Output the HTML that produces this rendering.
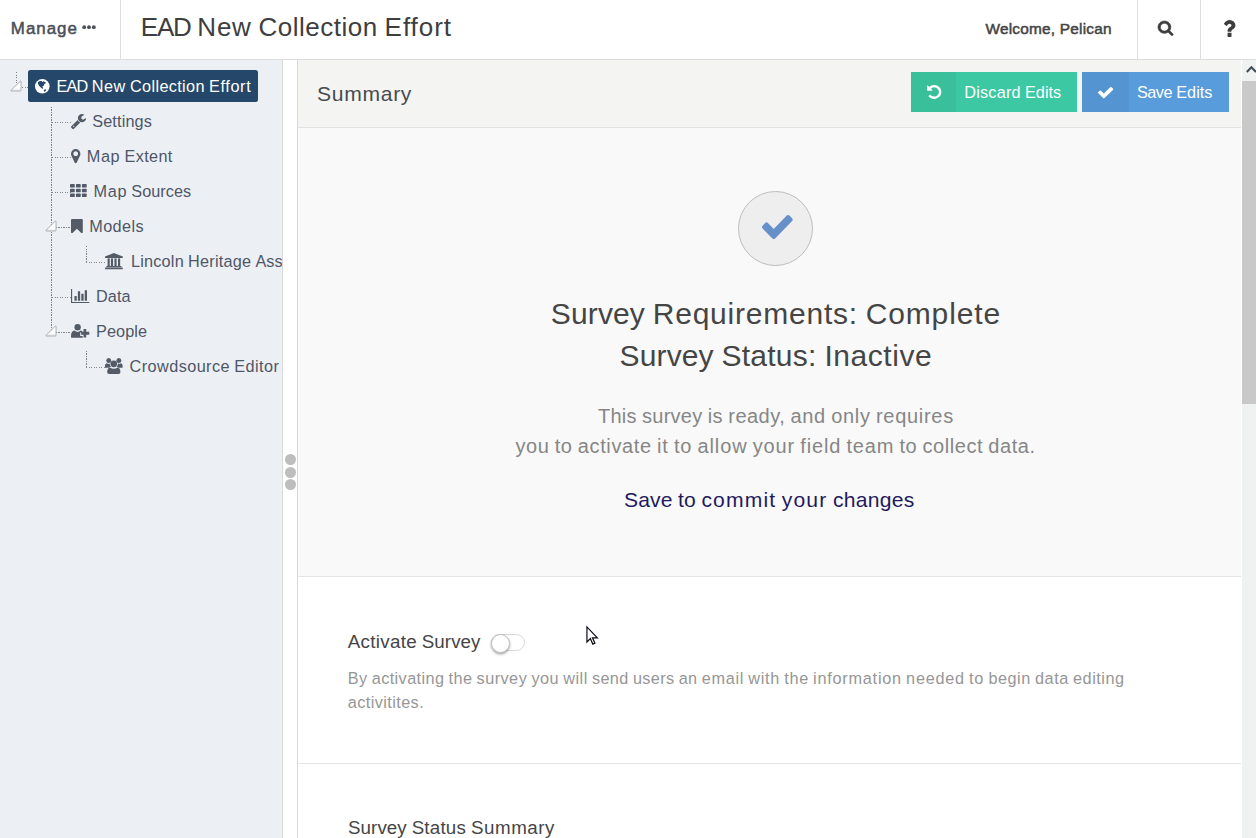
<!DOCTYPE html>
<html lang="en">
<head>
<meta charset="utf-8">
<title>EAD New Collection Effort</title>
<style>
html,body{margin:0;padding:0}
body{width:1256px;height:838px;overflow:hidden;position:relative;background:#fff;font-family:'Liberation Sans',sans-serif}
.t{position:absolute;white-space:nowrap;margin:0;padding:0;font-weight:400;display:block}
.i{position:absolute;display:block;overflow:visible}
.abs,.hd,.vd{position:absolute;display:block}
.hd{height:1.25px;background:repeating-linear-gradient(90deg,#666b75 0,#666b75 1.25px,transparent 1.25px,transparent 2.5px);opacity:.8}
.vd{width:1.25px;background:repeating-linear-gradient(180deg,#5d626c 0,#5d626c 1.25px,transparent 1.25px,transparent 2.5px);opacity:.8}
header{position:absolute;left:0;top:0;width:1256px;height:59px;background:#fff;border-bottom:1px solid #dcdcdc}
.vr{position:absolute;top:0;width:1px;height:59px;background:#dedede}
nav{position:absolute;left:0;top:60px;width:282px;height:778px;background:#ecf0f5;border-right:1px solid #d9d9d9;overflow:hidden}
nav .in{position:absolute;left:0;top:-60px;width:282px;height:838px}
.sel{position:absolute;left:28px;top:70px;width:230px;height:31.500px;background:#25476a;border-radius:2.500px}
.split{position:absolute;left:283px;top:60px;width:14px;height:778px;background:#fff}
.split b{position:absolute;left:2px;width:11px;height:11px;border-radius:50%;background:#bdbdbd}
main{position:absolute;left:297px;top:60px;width:944px;height:778px;border-left:1px solid #d9d9d9;box-sizing:border-box;background:#fff;overflow:hidden}
main .in{position:absolute;left:-298px;top:-60px;width:1256px;height:838px}
.bar{position:absolute;left:298px;top:60px;width:943px;height:67px;background:#f4f4f2;border-bottom:1px solid #e2e2e2}
.hero{position:absolute;left:298px;top:128px;width:943px;height:448px;background:#f9f9f9;border-bottom:1px solid #e4e4e4}
.hr{position:absolute;left:298px;width:943px;height:1px;background:#e4e4e4}
.btn{position:absolute;top:72px;height:40px;border:0;padding:0;margin:0;font:inherit;text-align:left;border-radius:0;cursor:pointer}
.o{position:absolute;display:block;width:0;height:0}
.btn s{position:absolute;left:0;top:0;height:40px;display:block}
.circle{position:absolute;left:737.900px;top:190.800px;width:73.200px;height:73.200px;border-radius:50%;background:#eee;border:1px solid #bdbdbd}
.tog{position:absolute;left:491.200px;top:634px;width:31.500px;height:15.400px;border:1px solid #d9d9d9;border-radius:10px;background:#fff}
.knob{position:absolute;left:490.800px;top:633.600px;width:19px;height:19px;border-radius:50%;background:#fff;box-shadow:0 1.200px 2.500px rgba(0,0,0,.36);box-sizing:border-box;border:.9px solid #c2c2c2}
.sb{position:absolute;left:1242px;top:60px;width:14px;height:778px;background:#f0f1f1}
.sb u{position:absolute;left:0;top:21px;width:14px;height:323px;background:#c9c9c9;display:block}
</style>
</head>
<body>
<header>
<span class="t" style="left:10.80px;top:17.80px;font-size:16.9px;line-height:22px;letter-spacing:1.011px;color:#4a4f58;-webkit-text-stroke:.5px #4a4f58;">Manage</span>
<svg class="i" style="left:81.60px;top:24.80px" width="14.00" height="4.40" viewBox="0 0 14 4.400" preserveAspectRatio="none"><circle cx="2.200" cy="2.200" r="1.900" fill="#4a4f58"/><circle cx="7" cy="2.200" r="1.900" fill="#4a4f58"/><circle cx="11.800" cy="2.200" r="1.900" fill="#4a4f58"/></svg>
<i class="vr" style="left:120px"></i>
<h1 class="t" style="left:140.80px;top:9.50px;font-size:26px;line-height:34px;letter-spacing:0.313px;color:#3e3e3e;"><span style="letter-spacing:-1.221px;word-spacing:0.730px">EAD </span><span style="letter-spacing:0.771px;word-spacing:-1.262px">New </span><span style="letter-spacing:0.529px;word-spacing:-1.019px">Collection </span><span style="letter-spacing:0.967px">Effort</span></h1>
<span class="t" style="left:985.50px;top:17.90px;font-size:15.4px;line-height:21px;letter-spacing:0.213px;color:#444;-webkit-text-stroke:.5px #444;">Welcome, Pelican</span>
<i class="vr" style="left:1137px"></i>
<svg class="i" style="left:1158.30px;top:20.80px" width="15.20" height="14.60" viewBox="64.0 128.0 1664.0 1664.0" preserveAspectRatio="none"><path d="M1216 832q0-185-131.500-316.500t-316.500-131.500-316.500 131.500-131.500 316.500 131.500 316.500 316.500 131.500 316.500-131.500 131.500-316.500zm512 832q0 52-38 90t-90 38q-54 0-90-38l-343-342q-179 124-399 124-143 0-273.500-55.500t-225-150-150-225-55.500-273.500 55.500-273.500 150-225 225-150 273.500-55.500 273.500 55.500 225 150 150 225 55.500 273.500q0 220-124 399l343 343q37 37 37 90z" fill="#3d3d3d" stroke="#3d3d3d" stroke-width="70"/></svg>
<i class="vr" style="left:1200px"></i>
<svg class="i" style="left:1223.90px;top:20.00px" width="11.40" height="16.90" viewBox="479.9 256.0 924.1 1280.0" preserveAspectRatio="none"><path d="M1088 1256v240q0 16-12 28t-28 12h-240q-16 0-28-12t-12-28v-240q0-16 12-28t28-12h240q16 0 28 12t12 28zm316-600q0 54-15.500 101t-35 76.500-55 59.500-57.500 43.500-61 35.500q-41 23-68.500 65t-27.500 67q0 17-12 32.500t-28 15.500h-240q-15 0-25.500-18.500t-10.500-37.500v-45q0-83 65-156.500t143-108.500q59-27 84-56t25-76q0-42-46.500-74t-107.500-32q-65 0-108 29-35 25-107 115-13 16-31 16-12 0-25-8l-164-125q-13-10-15.500-25t5.500-28q160-266 464-266 80 0 161 31t146 83 106 127.500 41 158.500z" fill="#3d3d3d"/></svg>
</header>
<nav><div class="in">
<i class="vd" style="left:15.80px;top:72.00px;height:12.00px"></i><i class="hd" style="left:21.50px;top:86.90px;width:6.50px"></i><svg class="i" style="left:7.90px;top:78.40px" width="14" height="14" viewBox="0 0 14 14"><defs><linearGradient id="eg1" x1="0" y1="0" x2="0" y2="1"><stop offset=".7" stop-color="#fff"/><stop offset="1" stop-color="#e6e6e6"/></linearGradient></defs><path d="M12.400 3.100 Q13 2.500 13 3.500 V12.300 Q13 13 12.300 13 H3.500 Q2.300 13 3.100 12.200 Z" fill="url(#eg1)" stroke="#a4a8af" stroke-width=".9" stroke-linejoin="round"/></svg>
<div class="sel"></div>
<svg class="i" style="left:35.25px;top:78.75px" width="14.60" height="14.60" viewBox="0 0 100 100" preserveAspectRatio="none"><circle cx="50" cy="50" r="50" fill="#fff"/><path d="M20 22 Q32 10 46 14 L52 22 L56 16 L66 18 L76 28 L64 34 L60 46 L50 52 L56 62 L52 68 L42 60 L30 50 L22 36 Z" fill="#25476a"/><path d="M60 76 L72 70 L78 74 L70 86 L62 86 Z" fill="#25476a"/></svg><a class="t" style="left:56.40px;top:75.10px;font-size:16.25px;line-height:22px;letter-spacing:0.210px;color:#fff;"><span style="letter-spacing:-0.750px;word-spacing:0.456px">EAD </span><span style="letter-spacing:0.500px;word-spacing:-0.793px">New </span><span style="letter-spacing:0.343px;word-spacing:-0.637px">Collection </span><span style="letter-spacing:0.616px">Effort</span></a>
<i class="vd" style="left:50.80px;top:107.00px;height:224.00px"></i>
<i class="hd" style="left:52.00px;top:121.90px;width:19.30px"></i><svg class="i" style="left:70.80px;top:113.90px" width="15.10" height="15.20" viewBox="85.0 128.0 1641.0 1643.0" preserveAspectRatio="none"><path d="M448 1472q0-26-19-45t-45-19-45 19-19 45 19 45 45 19 45-19 19-45zm644-420l-682 682q-37 37-90 37-52 0-91-37l-106-108q-38-36-38-90 0-53 38-91l681-681q39 98 114.500 173.500t173.500 114.500zm634-435q0 39-23 106-47 134-164.500 217.500t-258.500 83.500q-185 0-316.500-131.500t-131.500-316.500 131.500-316.500 316.500-131.500q58 0 121.500 16.500t107.500 46.500q16 11 16 28t-16 28l-293 169v224l193 107q5-3 79-48.500t135.500-81 70.500-35.500q15 0 23.500 10t8.500 25z" fill="#525b66"/></svg><a class="t" style="left:92.20px;top:110.10px;font-size:16.25px;line-height:22px;letter-spacing:0.140px;color:#4f5667;">Settings</a>
<i class="hd" style="left:52.00px;top:156.90px;width:19.30px"></i><svg class="i" style="left:70.80px;top:148.90px" width="9.40" height="14.20" viewBox="384.0 128.0 1024.0 1536.0" preserveAspectRatio="none"><path d="M1152 640q0-106-75-181t-181-75-181 75-75 181 75 181 181 75 181-75 75-181zm256 0q0 109-33 179l-364 774q-16 33-47.500 52t-67.500 19-67.500-19-46.500-52l-365-774q-33-70-33-179 0-212 150-362t362-150 362 150 150 362z" fill="#525b66"/></svg><a class="t" style="left:86.70px;top:145.10px;font-size:16.25px;line-height:22px;letter-spacing:0.366px;color:#4f5667;"><span style="letter-spacing:0.668px;word-spacing:-0.967px">Map </span><span style="letter-spacing:0.344px">Extent</span></a>
<i class="hd" style="left:52.00px;top:191.90px;width:19.30px"></i><svg class="i" style="left:70.20px;top:184.00px" width="16.70" height="13.10" viewBox="0 0 1792 1408" preserveAspectRatio="none"><rect x="0" y="0" width="512" height="384" rx="90" fill="#525b66"/><rect x="640" y="0" width="512" height="384" rx="90" fill="#525b66"/><rect x="1280" y="0" width="512" height="384" rx="90" fill="#525b66"/><rect x="0" y="512" width="512" height="384" rx="90" fill="#525b66"/><rect x="640" y="512" width="512" height="384" rx="90" fill="#525b66"/><rect x="1280" y="512" width="512" height="384" rx="90" fill="#525b66"/><rect x="0" y="1024" width="512" height="384" rx="90" fill="#525b66"/><rect x="640" y="1024" width="512" height="384" rx="90" fill="#525b66"/><rect x="1280" y="1024" width="512" height="384" rx="90" fill="#525b66"/></svg><a class="t" style="left:93.50px;top:180.10px;font-size:16.25px;line-height:22px;letter-spacing:0.145px;color:#4f5667;"><span style="letter-spacing:0.664px;word-spacing:-0.964px">Map </span><span style="letter-spacing:0.033px">Sources</span></a>
<i class="hd" style="left:56.00px;top:226.90px;width:15.30px"></i><svg class="i" style="left:42.50px;top:218.40px" width="14" height="14" viewBox="0 0 14 14"><defs><linearGradient id="eg2" x1="0" y1="0" x2="0" y2="1"><stop offset=".7" stop-color="#fff"/><stop offset="1" stop-color="#e6e6e6"/></linearGradient></defs><path d="M12.400 3.100 Q13 2.500 13 3.500 V12.300 Q13 13 12.300 13 H3.500 Q2.300 13 3.100 12.200 Z" fill="url(#eg2)" stroke="#a4a8af" stroke-width=".9" stroke-linejoin="round"/></svg><svg class="i" style="left:70.80px;top:218.90px" width="11.80" height="14.10" viewBox="0.0 0.0 1280.0 1513.0" preserveAspectRatio="none"><path d="M1164 0q23 0 44 9 33 13 52.500 41t19.500 62v1289q0 34-19.500 62t-52.500 41q-19 8-44 8-48 0-83-32l-441-424-441 424q-36 33-83 33-23 0-44-9-33-13-52.500-41t-19.500-62v-1289q0-34 19.500-62t52.500-41q21-9 44-9h1048z" fill="#525b66"/></svg><a class="t" style="left:89.20px;top:215.10px;font-size:16.25px;line-height:22px;letter-spacing:0.402px;color:#4f5667;">Models</a>
<i class="vd" style="left:85.80px;top:246.00px;height:16.60px"></i><i class="hd" style="left:86.40px;top:262.00px;width:19.60px"></i><svg class="i" style="left:105.40px;top:252.90px" width="17.80" height="16.30" viewBox="0 0 181 163" preserveAspectRatio="none"><path d="M90.500 0 L181 36 V50 H0 V36 Z" fill="#525b66"/><rect x="26" y="54" width="22" height="78" fill="#525b66"/><rect x="60" y="54" width="22" height="78" fill="#525b66"/><rect x="96" y="54" width="22" height="78" fill="#525b66"/><rect x="132" y="54" width="22" height="78" fill="#525b66"/><rect x="14" y="130" width="153" height="12" fill="#525b66"/><rect x="0" y="146" width="181" height="17" rx="3" fill="#525b66"/></svg><a class="t" style="left:130.90px;top:250.10px;font-size:16.25px;line-height:22px;letter-spacing:0.166px;color:#4f5667;"><span style="letter-spacing:0.218px;word-spacing:-0.600px">Lincoln </span><span style="letter-spacing:0.234px;word-spacing:-0.617px">Heritage </span><span style="letter-spacing:-0.005px">Assessment</span></a>
<i class="hd" style="left:52.00px;top:296.90px;width:19.30px"></i><svg class="i" style="left:70.80px;top:288.90px" width="18.30" height="14.10" viewBox="0.0 128.0 2048.0 1536.0" preserveAspectRatio="none"><path d="M2048 1536v128h-2048v-1536h128v1408h1920zM640 896v512h-256v-512h256zM1024 384v1024h-256v-1024h256zM1408 640v768h-256v-768h256zM1792 256v1152h-256v-1152h256z" fill="#525b66"/></svg><a class="t" style="left:96.00px;top:285.10px;font-size:16.25px;line-height:22px;letter-spacing:0.091px;color:#4f5667;">Data</a>
<i class="hd" style="left:56.00px;top:331.90px;width:15.30px"></i><svg class="i" style="left:42.50px;top:323.40px" width="14" height="14" viewBox="0 0 14 14"><defs><linearGradient id="eg3" x1="0" y1="0" x2="0" y2="1"><stop offset=".7" stop-color="#fff"/><stop offset="1" stop-color="#e6e6e6"/></linearGradient></defs><path d="M12.400 3.100 Q13 2.500 13 3.500 V12.300 Q13 13 12.300 13 H3.500 Q2.300 13 3.100 12.200 Z" fill="url(#eg3)" stroke="#a4a8af" stroke-width=".9" stroke-linejoin="round"/></svg><svg class="i" style="left:70.80px;top:324.20px" width="18.30" height="13.80" viewBox="0 0 191 138" preserveAspectRatio="none"><circle cx="69" cy="33" r="33" fill="#525b66"/><path d="M2 138 Q0 138 0 120 Q0 72 36 66 Q52 80 69 80 Q86 80 102 66 Q112 68 118 74 V84 H96 V120 H122 V138 Z" fill="#525b66"/><path d="M131 50 H159 V78 H191 V107 H159 V136 H131 V107 H106 V78 H131 Z" fill="#525b66"/></svg><a class="t" style="left:96.00px;top:320.10px;font-size:16.25px;line-height:22px;letter-spacing:0.098px;color:#4f5667;">People</a>
<i class="vd" style="left:85.80px;top:351.00px;height:16.60px"></i><i class="hd" style="left:86.40px;top:367.00px;width:19.60px"></i><svg class="i" style="left:105.00px;top:358.00px" width="17.60" height="16.00" viewBox="0 0 179 160" preserveAspectRatio="none"><circle cx="38" cy="25" r="25" fill="#525b66"/><circle cx="141" cy="25" r="25" fill="#525b66"/><path d="M0 98 V76 Q0 54 18 52 Q30 62 46 56 Q50 78 62 88 Q50 90 42 98 Z" fill="#525b66"/><path d="M179 98 V76 Q179 54 161 52 Q149 62 133 56 Q129 78 117 88 Q129 90 137 98 Z" fill="#525b66"/><circle cx="89.500" cy="58" r="34" fill="#525b66"/><path d="M22 142 Q22 100 50 94 Q70 108 89.500 108 Q109 108 129 94 Q157 100 157 142 Q157 160 137 160 H42 Q22 160 22 142 Z" fill="#525b66"/></svg><a class="t" style="left:129.60px;top:355.10px;font-size:16.25px;line-height:22px;letter-spacing:0.394px;color:#4f5667;"><span style="letter-spacing:0.420px;word-spacing:-0.713px">Crowdsource </span><span style="letter-spacing:0.475px">Editor</span></a>
</div></nav>
<div class="split"><b style="top:393.500px"></b><b style="top:406.500px"></b><b style="top:419px"></b></div>
<main><div class="in">
<div class="bar"></div>
<h2 class="t" style="left:317.00px;top:80.20px;font-size:21.1px;line-height:28px;letter-spacing:0.692px;color:#484b52;">Summary</h2>
<button type="button" class="btn" style="left:911px;width:166px;background:#3cc8a2"><s style="width:45px;background:#3abf9b"></s><span class="o" style="left:-911px;top:-72px"><svg class="i" style="left:926.70px;top:85.10px" width="14.30" height="13.90" viewBox="-0.5 128.5 1536.5 1536.0" preserveAspectRatio="none"><path d="M1536 896q0 156-61 298t-164 245.500-245.500 164-298 61q-172 0-327-72.500t-264-204.500q-7-10-6.500-22.500t8.500-20.500l137-138q10-9 25-9 16 2 23 12 73 95 179 147t225 52q104 0 198.500-40.500t163.500-109.500 109.500-163.500 40.500-198.500-40.500-198.500-109.500-163.500-163.500-109.500-198.500-40.500q-98 0-188 35.500t-160 101.500l137 138q31 30 14 69-17 40-59 40h-448q-26 0-45-19t-19-45v-448q0-42 40-59 39-17 69 14l130 129q107-101 244.500-156.500t284.500-55.500q156 0 298 61t245 164 164 245 61 298z" fill="#fff"/></svg><span class="t" style="left:964.20px;top:81.00px;font-size:16.25px;line-height:22px;letter-spacing:0.072px;color:#fff;"><span style="letter-spacing:0.216px;word-spacing:-0.545px">Discard </span><span style="letter-spacing:0.031px">Edits</span></span></span></button>
<button type="button" class="btn" style="left:1082px;width:147px;background:#589cdc"><s style="width:47px;background:#5494d1"></s><span class="o" style="left:-1082px;top:-72px"><svg class="i" style="left:1098.40px;top:86.90px" width="15.20" height="11.40" viewBox="121.0 334.0 1550.0 1188.0" preserveAspectRatio="none"><path d="M1671 566q0 40-28 68l-724 724-136 136q-28 28-68 28t-68-28l-136-136-362-362q-28-28-28-68t28-68l136-136q28-28 68-28t68 28l294 295 656-657q28-28 68-28t68 28l136 136q28 28 28 68z" fill="#fff"/></svg><span class="t" style="left:1136.90px;top:81.00px;font-size:16.25px;line-height:22px;letter-spacing:-0.276px;color:#fff;"><span style="letter-spacing:-0.498px;word-spacing:0.184px">Save </span><span style="letter-spacing:0.058px">Edits</span></span></span></button>
<div class="hero"></div>
<div class="circle"></div><svg class="i" style="left:761.80px;top:215.00px" width="30.70" height="24.10" viewBox="121.0 334.0 1550.0 1188.0" preserveAspectRatio="none"><path d="M1671 566q0 40-28 68l-724 724-136 136q-28 28-68 28t-68-28l-136-136-362-362q-28-28-28-68t28-68l136-136q28-28 68-28t68 28l294 295 656-657q28-28 68-28t68 28l136 136q28 28 28 68z" fill="#678fca"/></svg>
<h3 class="t" style="left:550.80px;top:294.00px;font-size:30px;line-height:39px;letter-spacing:0.563px;color:#454545;"><span style="letter-spacing:0.137px;word-spacing:-0.680px">Survey </span><span style="letter-spacing:0.769px;word-spacing:-1.311px">Requirements: </span><span style="letter-spacing:0.864px">Complete</span></h3><h3 class="t" style="left:619.60px;top:336.40px;font-size:30px;line-height:39px;letter-spacing:0.222px;color:#454545;"><span style="letter-spacing:0.126px;word-spacing:-0.674px">Survey </span><span style="letter-spacing:0.242px;word-spacing:-0.790px">Status: </span><span style="letter-spacing:0.553px">Inactive</span></h3>
<p class="t" style="left:598.00px;top:403.40px;font-size:20px;line-height:26px;letter-spacing:0.379px;color:#868686;"><span style="letter-spacing:0.258px;word-spacing:-0.624px">This survey </span><span style="letter-spacing:0.477px;word-spacing:-0.843px">is ready, </span><span style="letter-spacing:0.732px;word-spacing:-1.097px">and only </span><span style="letter-spacing:0.707px">requires</span></p><p class="t" style="left:515.40px;top:432.50px;font-size:20px;line-height:26px;letter-spacing:0.516px;color:#868686;"><span style="letter-spacing:0.621px;word-spacing:-0.982px">you to activate </span><span style="letter-spacing:0.887px;word-spacing:-1.248px">it to allow </span><span style="letter-spacing:0.853px;word-spacing:-1.214px">your field team </span><span style="letter-spacing:0.561px;word-spacing:-0.922px">to collect data.</span></p>
<p class="t" style="left:624.00px;top:486.20px;font-size:21.1px;line-height:28px;letter-spacing:0.466px;color:#1f1a5e;"><span style="letter-spacing:0.110px;word-spacing:-0.452px">Save to </span><span style="letter-spacing:1.153px;word-spacing:-1.496px">commit your </span><span style="letter-spacing:0.272px">changes</span></p>
<h4 class="t" style="left:347.80px;top:629.00px;font-size:18.75px;line-height:25px;letter-spacing:0.138px;color:#454545;"><span style="letter-spacing:0.301px;word-spacing:-0.650px">Activate </span><span style="letter-spacing:0.073px">Survey</span></h4><div class="tog"></div><div class="knob"></div>
<p class="t" style="left:347.80px;top:667.00px;font-size:16.25px;line-height:22px;letter-spacing:0.411px;color:#969696;"><span style="letter-spacing:0.391px;word-spacing:-0.685px">By activating the </span><span style="letter-spacing:0.472px;word-spacing:-0.766px">survey you will </span><span style="letter-spacing:0.363px;word-spacing:-0.658px">send users an </span><span style="letter-spacing:0.704px;word-spacing:-0.999px">email with the </span><span style="letter-spacing:0.761px;word-spacing:-1.055px">information needed to </span><span style="letter-spacing:0.529px;word-spacing:-0.823px">begin data editing</span></p><p class="t" style="left:347.80px;top:690.90px;font-size:16.25px;line-height:22px;letter-spacing:0.411px;color:#969696;">activitites.</p>
<div class="hr" style="top:763px"></div>
<h4 class="t" style="left:348.00px;top:815.25px;font-size:18.75px;line-height:25px;letter-spacing:0.217px;color:#454545;"><span style="letter-spacing:0.070px;word-spacing:-0.421px">Survey </span><span style="letter-spacing:0.204px;word-spacing:-0.555px">Status </span><span style="letter-spacing:0.564px">Summary</span></h4>
</div></main>
<div class="sb"><u></u><svg class="i" style="left:4.00px;top:4.60px" width="10.80" height="9.00" viewBox="0 0 10.800 9" preserveAspectRatio="none"><path d="M0.800 7 L5.400 2.300 L10 7" fill="none" stroke="#414b56" stroke-width="2"/></svg></div>
<svg class="i" style="left:585.80px;top:625.90px" width="13.00" height="19.70" viewBox="0 0 14 21" preserveAspectRatio="none"><path d="M1 1 V17 L4.700 13.400 L7.300 19.300 L9.600 18.300 L7 12.600 H12.200 Z" fill="#fff" stroke="#0c0c14" stroke-width="1.300" stroke-linejoin="miter"/></svg>
</body>
</html>
